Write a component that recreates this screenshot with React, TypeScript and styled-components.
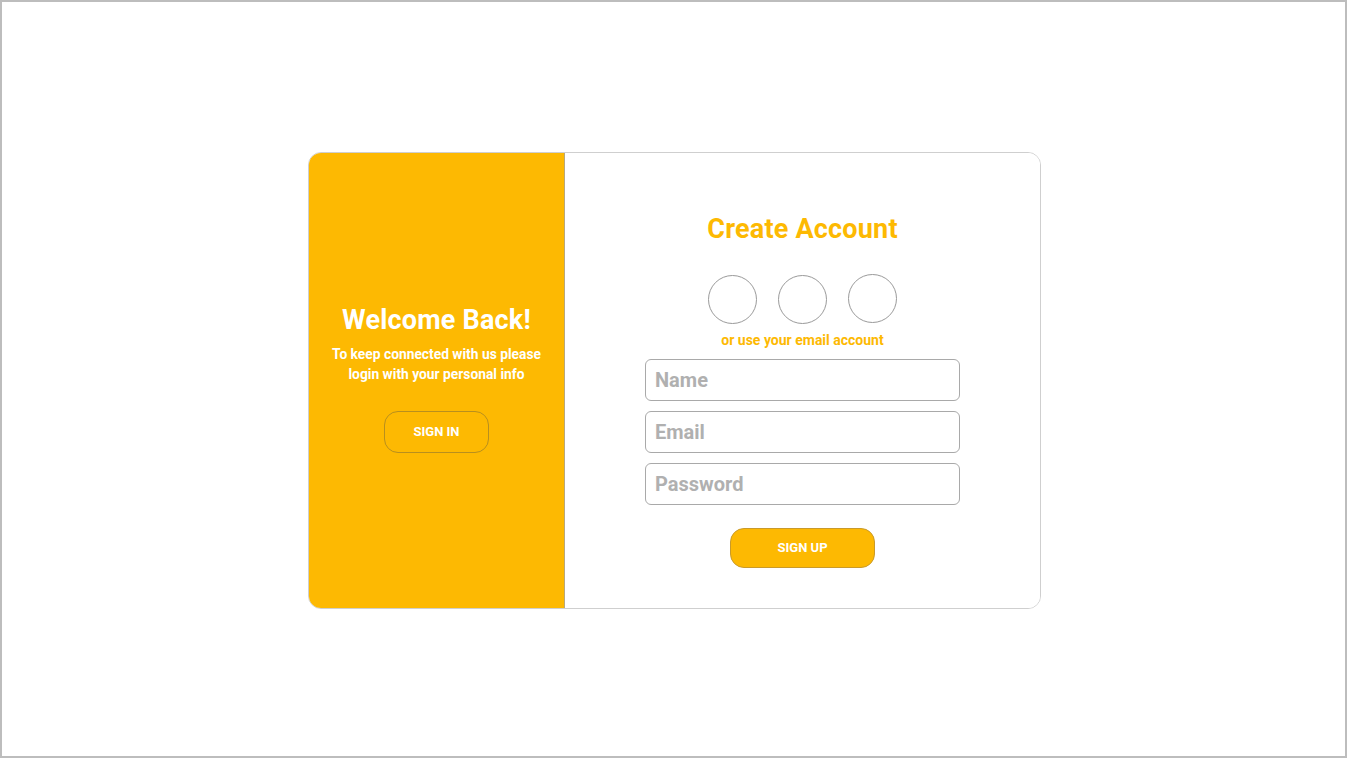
import React from "react";
import styled, { createGlobalStyle } from "styled-components";

const Global = createGlobalStyle`
  html, body { margin: 0; padding: 0; }
  body { font-family: Roboto, "Liberation Sans", sans-serif; background: #fff; }
  * { box-sizing: border-box; }
`;

const YELLOW = "#fdb902";

const Page = styled.div`
  width: 1347px;
  height: 758px;
  border: 2px solid #bdbdbd;
  display: flex;
  align-items: center;
  justify-content: center;
  padding: 2px 0 0 2px;
  background: #fff;
`;

const Card = styled.div`
  width: 733px;
  height: 457px;
  border: 1px solid #cfcfcf;
  border-radius: 13px;
  overflow: hidden;
  display: flex;
`;

const LeftPanel = styled.div`
  width: 256px;
  flex: none;
  background: ${YELLOW};
  border-right: 1px solid #b9a87a;
  display: flex;
  flex-direction: column;
  align-items: center;
  justify-content: center;
  padding-bottom: 3px;
  color: #fff;
  text-align: center;
`;

const RightPanel = styled.div`
  flex: 1;
  display: flex;
  flex-direction: column;
  align-items: center;
  padding-top: 61px;
  background: #fff;
`;

const Heading = styled.h1<{ $color: string }>`
  margin: 0;
  font-size: 27px;
  line-height: 30px;
  font-weight: 700;
  color: ${(p) => p.$color};
  letter-spacing: 0.2px;
`;

const Lead = styled.p`
  margin: 9px 0 0;
  font-size: 13.8px;
  line-height: 20px;
  font-weight: 700;
`;

const Button = styled.button<{ $filled?: boolean; $w: number; $h: number }>`
  width: ${(p) => p.$w}px;
  height: ${(p) => p.$h}px;
  border-radius: 14px;
  border: 1px solid ${(p) => (p.$filled ? "#c99a2a" : "#b88f1e")};
  background: ${YELLOW};
  color: #fff;
  font-family: inherit;
  font-size: 13px;
  font-weight: 700;
  padding: 0;
  cursor: pointer;
`;

const SignInButton = styled(Button)`
  margin-top: 27px;
`;

const Socials = styled.div`
  display: flex;
  gap: 21px;
  margin-top: 30px;
  align-items: flex-start;
`;

const Circle = styled.div<{ $shift?: number }>`
  width: 49px;
  height: 49px;
  border-radius: 50%;
  border: 1px solid #9a9a9a;
  margin-top: ${(p) => p.$shift ?? 0}px;
`;

const Hint = styled.div`
  margin-top: 8px;
  font-size: 14px;
  line-height: 16px;
  font-weight: 700;
  color: ${YELLOW};
`;

const Form = styled.form`
  display: flex;
  flex-direction: column;
  align-items: center;
  gap: 10px;
  margin-top: 11px;
`;

const Input = styled.input`
  width: 315px;
  height: 42px;
  border: 1px solid #a9a9a9;
  border-radius: 6px;
  padding: 0 9px;
  font-family: inherit;
  font-size: 20px;
  font-weight: 700;
  color: #555;
  outline: none;
  &::placeholder { color: #b0b0b0; }
`;

const SignUpButton = styled(Button)`
  margin-top: 13px;
`;

export default function App() {
  return (
    <>
      <Global />
      <Page>
        <Card>
          <LeftPanel>
            <Heading $color="#fff">Welcome Back!</Heading>
            <Lead>
              To keep connected with us please
              <br />
              login with your personal info
            </Lead>
            <SignInButton $w={105} $h={42}>SIGN IN</SignInButton>
          </LeftPanel>
          <RightPanel>
            <Heading $color={YELLOW}>Create Account</Heading>
            <Socials>
              <Circle $shift={1} />
              <Circle $shift={1} />
              <Circle />
            </Socials>
            <Hint>or use your email account</Hint>
            <Form onSubmit={(e) => e.preventDefault()}>
              <Input placeholder="Name" />
              <Input placeholder="Email" />
              <Input placeholder="Password" type="password" />
              <SignUpButton $filled $w={145} $h={40} type="submit">SIGN UP</SignUpButton>
            </Form>
          </RightPanel>
        </Card>
      </Page>
    </>
  );
}
